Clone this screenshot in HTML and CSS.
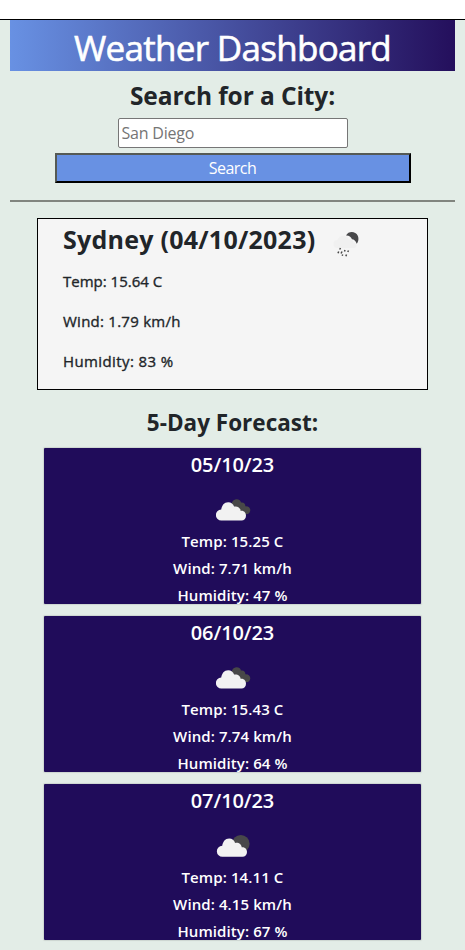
FILE: index.html
```html
<!DOCTYPE html>
<html lang="en">
<head>
<meta charset="utf-8">
<title>Weather Dashboard</title>
<link rel="stylesheet" href="styles.css">
</head>
<body>
<svg class="defs" aria-hidden="true">
  <defs>
    <g id="white-cloud"><path d="M5.500 20.500a5.500 5.500 0 0 1-.3-11C6 5.500 8 2.300 12.200 2.300c3 0 5 1.900 5.900 4.300 3.200-.9 6.500 1.300 6.600 4.300 3.200-.5 5.300 2 5.300 4.800s-2 4.800-4.500 4.800z" fill="#f2f2f2"/></g>
    <symbol id="clouds" viewBox="0 0 35 24">
      <path d="M15.500 5.500C17 0 24 0 25 4.500c3-.5 4.600 1.500 4.300 3.700 3-.3 5 1.500 5 4 0 2.700-2.300 4.500-5 3.800L22 13z" fill="#484848"/>
      <use href="#white-cloud" y="2"/>
    </symbol>
    <symbol id="broken" viewBox="0 0 35 24">
      <circle cx="24.800" cy="9.700" r="8.800" fill="#48484a"/>
      <use href="#white-cloud" x="1" y="2.300"/>
    </symbol>
    <symbol id="rain" viewBox="0 0 28 28">
      <path d="M13 4.500C15.500-.3 22.500 0 24.800 4.800c1.200 3 .6 6-1.100 8-1-3.200-2.700-4.300-4.700-4.500-1-2.800-3.200-4-6-3.800z" fill="#48484a"/>
      <path d="M4.500 17a4 4 0 0 1 0-8C5.500 6 8 4.700 10.200 4.700c3 0 4.700 1.600 5.300 3.700 2.600-.4 4.500 1 5 3.300 2 .2 3 1.400 3 2.800 0 1.500-1.200 2.500-2.700 2.500z" fill="#f0f0f0"/>
      <path d="M7.500 17l-.8 1.500M12 19l-.5 1.500M15.500 19.500l-.7 1.500M5.700 20.500l-.7 1.800M9 20.500l-.9 2M13.500 23.500l-.6 1.800M9.700 23.500l-.5 1.200" stroke="#484848" stroke-width="1.500" fill="none"/>
    </symbol>
  </defs>
</svg>
<main class="page">
  <header class="header"><h1>Weather Dashboard</h1></header>
  <form class="search">
    <h2 class="search-title">Search for a City:</h2>
    <input class="city" type="text" placeholder="San Diego" aria-label="City">
    <button class="submit" type="button">Search</button>
  </form>
  <hr class="rule">
  <section class="today">
    <h2 class="today-title"><span>Sydney (04/10/2023)</span><svg class="rain"><use href="#rain"/></svg></h2>
    <p class="temp">Temp: 15.64 C</p>
    <p class="wind">Wind: 1.79 km/h</p>
    <p class="humidity">Humidity: 83 %</p>
  </section>
  <h2 class="forecast-title">5-Day Forecast:</h2>
  <section class="forecast">
    <article class="day"><h3>05/10/23</h3><svg class="icon"><use href="#clouds"/></svg><p>Temp: 15.25 C</p><p>Wind: 7.71 km/h</p><p>Humidity: 47 %</p></article>
    <article class="day"><h3>06/10/23</h3><svg class="icon"><use href="#clouds"/></svg><p>Temp: 15.43 C</p><p>Wind: 7.74 km/h</p><p>Humidity: 64 %</p></article>
    <article class="day"><h3>07/10/23</h3><svg class="icon"><use href="#broken"/></svg><p>Temp: 14.11 C</p><p>Wind: 4.15 km/h</p><p>Humidity: 67 %</p></article>
  </section>
</main>
</body>
</html>
```
FILE: styles.css
```css
* { box-sizing: border-box; }
body { margin: 0; padding-top: 19px; background: #fff; color: #212529; font-family: "Segoe UI", "Open Sans", "Noto Sans", sans-serif; font-size: 15px; height: 950px; overflow: hidden; }
h1, h2, h3, p { margin: 0; }
.defs { position: absolute; width: 0; height: 0; }
.page { border-top: 1px solid #000; background: #e3ede7; padding: 0 10px; height: 931px; }
.header { height: 51px; background: linear-gradient(to right, #6891e3, #240f5c); text-align: center; color: #fff; }
h1 { font-size: 35px; font-weight: 500; line-height: 55px; letter-spacing: -0.7px; white-space: nowrap; -webkit-text-stroke: 0.6px currentColor; }
.search { display: flex; flex-direction: column; align-items: center; }
.search-title { font-size: 24.5px; font-weight: 700; line-height: 30px; margin: 10px 0 7px; letter-spacing: -0.1px; }
.city { width: 230px; height: 30px; padding: 1px 2px 1px 3px; border: 1px solid #767676; border-radius: 2px; background: #fff; font: 16px "Segoe UI", "Open Sans", sans-serif; letter-spacing: -0.2px; }
.city::placeholder { color: #757575; }
.submit { width: 356px; height: 30px; margin-top: 5px; padding: 0; background: #6891e3; color: #fff; border: 2px solid; border-color: #555a55 #000 #000 #555a55; font: 16px/26px "Segoe UI", "Open Sans", sans-serif; letter-spacing: -0.5px; }
.rule { height: 2px; margin: 17px 0 16px; border: 0; background: #81857f; }
.today { width: 391px; height: 172px; margin-left: 27px; padding: 0 25px; border: 1px solid #000; background: #f5f5f5; font-weight: 500; }
.today-title { display: flex; font-size: 25px; font-weight: 700; line-height: 40px; height: 42px; letter-spacing: 0.25px; }
.today-title span { width: 270px; white-space: nowrap; }
.rain { width: 28px; height: 28px; margin-top: 12px; }
.today p { line-height: 40px; -webkit-text-stroke: 0.35px currentColor; }
.wind { letter-spacing: 0.25px; }
.humidity { letter-spacing: 0.4px; }
.forecast-title { margin-top: 17px; text-align: center; font-size: 22.5px; font-weight: 700; line-height: 32px; }
.forecast { display: flex; flex-direction: column; align-items: center; gap: 12px; margin-top: 9px; }
.day { width: 377px; height: 156px; display: flex; flex-direction: column; align-items: center; background: #200c5a; color: #fff; box-shadow: 0 0 1px 1px rgba(0, 0, 0, .1); border-radius: 1px; }
.day > * { flex: none; }
.day h3 { font-size: 20px; font-weight: 600; line-height: 34px; height: 34px; letter-spacing: -0.1px; }
.icon { width: 35px; height: 24px; margin: 16px 0 6px 2px; }
.day p { font-weight: 600; line-height: 27px; height: 27px; letter-spacing: 0.1px; }
```
